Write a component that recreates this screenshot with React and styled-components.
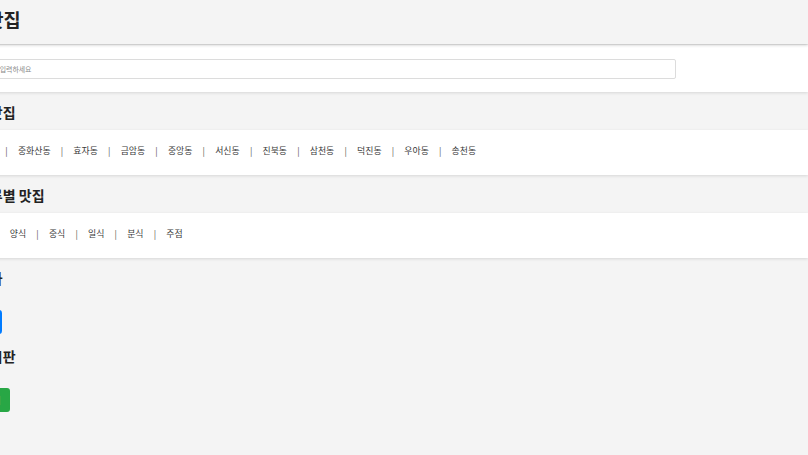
import React from "react";
import styled, { createGlobalStyle } from "styled-components";

const GlobalStyle = createGlobalStyle`
  html, body {
    margin: 0;
    padding: 0;
    background: #f4f4f4;
    overflow: hidden;
  }
  body {
    font-family: "Noto Sans CJK KR", "Noto Sans", sans-serif;
    color: #222;
  }
`;

const Page = styled.div`
  margin-left: -88px;
  min-height: 455px;
  background: #f4f4f4;
`;

const Header = styled.header`
  position: relative;
  z-index: 2;
  height: 44px;
  box-sizing: border-box;
  display: flex;
  align-items: center;
  padding: 0 0 6px 36px;
  background: #f4f4f4;
  box-shadow: 0 1px 3px rgba(0, 0, 0, 0.22);
`;

const Title = styled.h1`
  margin: 0;
  font-size: 18.6px;
  font-weight: 700;
  line-height: 22px;
  color: #222;
`;

const Band = styled.section`
  position: relative;
  z-index: 1;
  background: #fff;
  box-shadow: 0 1px 3px rgba(0, 0, 0, 0.12);
  box-sizing: border-box;
  height: ${(p) => p.$h || 45}px;
  margin-top: ${(p) => p.$mt || 0}px;
  padding: 0 19.5px ${(p) => p.$pb || 0}px;
  display: flex;
  align-items: center;
`;

const SearchInput = styled.input`
  box-sizing: border-box;
  width: 744px;
  height: 19.5px;
  margin-top: 1px;
  padding: 0 4px;
  border: 1px solid #dcdcdc;
  border-radius: 2px;
  font-family: "Noto Sans CJK KR", "Noto Sans", sans-serif;
  font-size: 6.9px;
  color: #333;
  outline: none;
  &::placeholder {
    color: #8a8a8a;
  }
`;

const SectionTitle = styled.h2`
  margin: 0;
  padding: 10px 0 8px 36px;
  font-size: 14px;
  font-weight: 700;
  line-height: 20px;
  color: #222;
`;

const LinkList = styled.nav`
  display: flex;
  align-items: center;
  white-space: nowrap;
  font-size: 8.9px;
  line-height: 12px;
`;

const LinkItem = styled.a`
  color: #3a3a3a;
  text-decoration: none;
  cursor: pointer;
`;

const Sep = styled.span`
  color: #555;
  margin: 0 10.2px;
`;

const ActionBlock = styled.div`
  padding: 0 0 0 36px;
`;

const ActionTitle = styled.h2`
  margin: 0 0 22px;
  padding-top: ${(p) => p.$pt}px;
  font-size: 14px;
  font-weight: 700;
  line-height: 20px;
  color: #222;
`;

const Button = styled.button`
  display: inline-flex;
  align-items: center;
  height: 24px;
  padding: 0 9.75px;
  border: none;
  border-radius: 3px;
  background: ${(p) => p.$bg};
  color: #fff;
  font-family: "Noto Sans CJK KR", "Noto Sans", sans-serif;
  font-size: 8.9px;
  cursor: pointer;
  vertical-align: top;
`;

const neighborhoods = [
  "전체", "평화동", "중화산동", "효자동", "금암동", "중앙동", "서신동",
  "진북동", "삼천동", "덕진동", "우아동", "송천동",
];
const categories = ["전체", "한식", "양식", "중식", "일식", "분식", "주점"];

function Links({ items }) {
  return (
    <LinkList>
      {items.map((it, i) => (
        <React.Fragment key={it}>
          {i > 0 && <Sep>|</Sep>}
          <LinkItem>{it}</LinkItem>
        </React.Fragment>
      ))}
    </LinkList>
  );
}

export default function App() {
  return (
    <>
      <GlobalStyle />
      <Page>
        <Header>
          <Title>전주 맛집</Title>
        </Header>
        <Band $h={47} $mt={1}>
          <SearchInput placeholder="맛집 이름 또는 메뉴를 입력하세요" />
        </Band>
        <SectionTitle>동네별 맛집</SectionTitle>
        <Band $pb={3}>
          <Links items={neighborhoods} />
        </Band>
        <SectionTitle>음식 종류별 맛집</SectionTitle>
        <Band $pb={3}>
          <Links items={categories} />
        </Band>
        <ActionBlock>
          <ActionTitle $pt={10}>맛집 추가</ActionTitle>
          <Button $bg="#007bff">맛집 추가</Button>
        </ActionBlock>
        <ActionBlock>
          <ActionTitle $pt={12}>자유 게시판</ActionTitle>
          <Button $bg="#28a745">게시판 가기</Button>
        </ActionBlock>
      </Page>
    </>
  );
}
